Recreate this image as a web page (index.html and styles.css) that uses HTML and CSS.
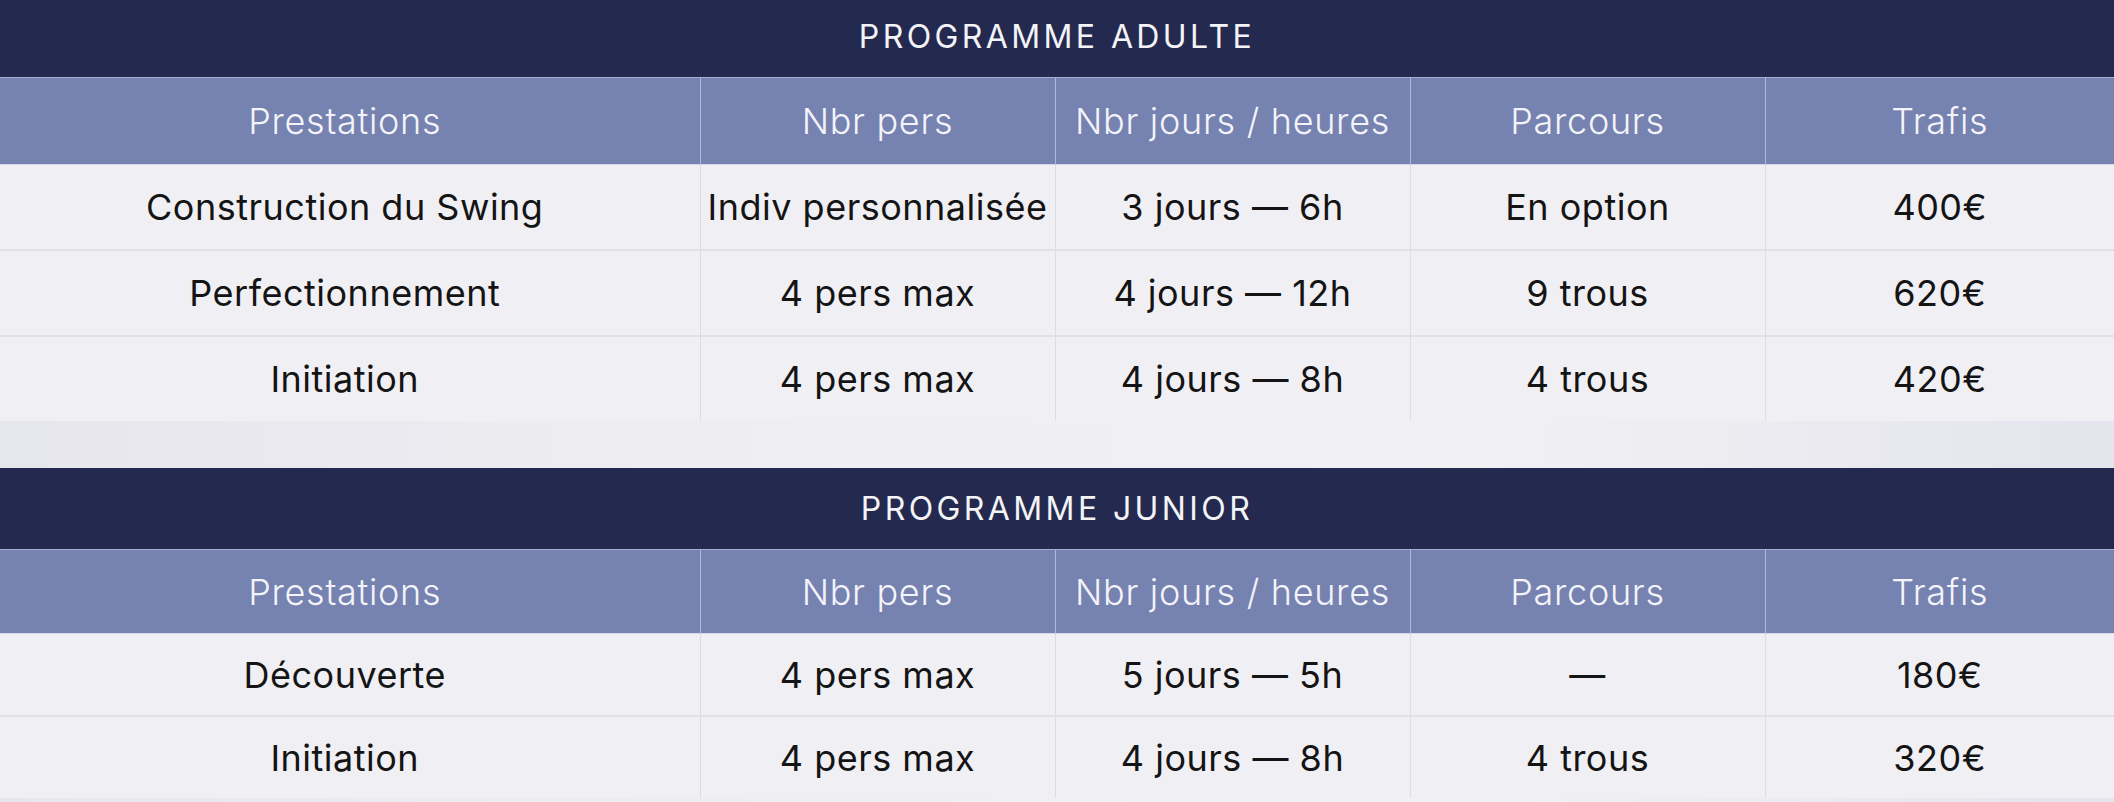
FILE: index.html
```html
<!DOCTYPE html>
<html lang="fr">
<head>
<meta charset="utf-8">
<title>Programmes</title>
<link rel="stylesheet" href="styles.css">
</head>
<body>
<section class="program adult">
  <h2 class="program-title">PROGRAMME ADULTE</h2>
  <table class="grid">
    <colgroup>
      <col class="c-main"><col class="c-std"><col class="c-std"><col class="c-std"><col class="c-last">
    </colgroup>
    <thead>
      <tr><th>Prestations</th><th>Nbr pers</th><th>Nbr jours / heures</th><th>Parcours</th><th>Trafis</th></tr>
    </thead>
    <tbody>
      <tr><td>Construction du Swing</td><td>Indiv personnalisée</td><td>3 jours — 6h</td><td>En option</td><td>400€</td></tr>
      <tr><td>Perfectionnement</td><td>4 pers max</td><td>4 jours — 12h</td><td>9 trous</td><td>620€</td></tr>
      <tr><td>Initiation</td><td>4 pers max</td><td>4 jours — 8h</td><td>4 trous</td><td>420€</td></tr>
    </tbody>
  </table>
</section>
<section class="program junior">
  <h2 class="program-title">PROGRAMME JUNIOR</h2>
  <table class="grid">
    <colgroup>
      <col class="c-main"><col class="c-std"><col class="c-std"><col class="c-std"><col class="c-last">
    </colgroup>
    <thead>
      <tr><th>Prestations</th><th>Nbr pers</th><th>Nbr jours / heures</th><th>Parcours</th><th>Trafis</th></tr>
    </thead>
    <tbody>
      <tr><td>Découverte</td><td>4 pers max</td><td>5 jours — 5h</td><td>—</td><td>180€</td></tr>
      <tr><td>Initiation</td><td>4 pers max</td><td>4 jours — 8h</td><td>4 trous</td><td>320€</td></tr>
    </tbody>
  </table>
</section>
</body>
</html>
```
FILE: styles.css
```css
html, body {
  margin: 0;
  padding: 0;
}
body {
  width: 2114px;
  height: 802px;
  overflow: hidden;
  background: linear-gradient(90deg, #e6e6ed 0%, #efeff3 40%, #f1f1f4 70%, #e4e5ed 100%);
  font-family: Inter, "Noto Sans", sans-serif;
  color: #141414;
}
.program {
  display: flex;
  flex-direction: column;
}
.junior {
  margin-top: 47px;
}
.program-title {
  margin: 0;
  background: #242a4f;
  color: #f4f4f8;
  font-weight: 400;
  font-size: 32px;
  letter-spacing: 3.4px;
  text-align: center;
  display: flex;
  align-items: center;
  justify-content: center;
  border-bottom: 1px solid #a6aed0;
  box-sizing: border-box;
}
.adult .program-title {
  height: 78px;
  padding-bottom: 4px;
}
.junior .program-title {
  height: 82px;
}
.grid {
  border-collapse: collapse;
  table-layout: fixed;
  width: 2124px;
  margin-left: -10px;
}
.c-main { width: 710px; }
.c-std { width: 355px; }
.c-last { width: 349px; }
.grid th,
.grid td {
  padding: 0;
  text-align: center;
  white-space: nowrap;
  font-size: 36px;
}
.grid th {
  background: #7682b0;
  color: #f3f4fa;
  font-weight: 300;
  letter-spacing: 0.7px;
  border-left: 1px solid #b4bbd8;
}
.grid td {
  background: #f0eff4;
  font-weight: 400;
  letter-spacing: 0.5px;
  border-left: 1px solid #dcdce3;
  border-top: 2px solid #e0e0e6;
}
.grid th:first-child,
.grid td:first-child {
  border-left: none;
}
.grid tbody tr:first-child td {
  border-top: 1px solid #d4d8e8;
}
.adult .grid th { height: 86px; }
.adult .grid td { height: 84px; }
.junior .grid th { height: 83px; }
.junior .grid td { height: 81px; }
```
